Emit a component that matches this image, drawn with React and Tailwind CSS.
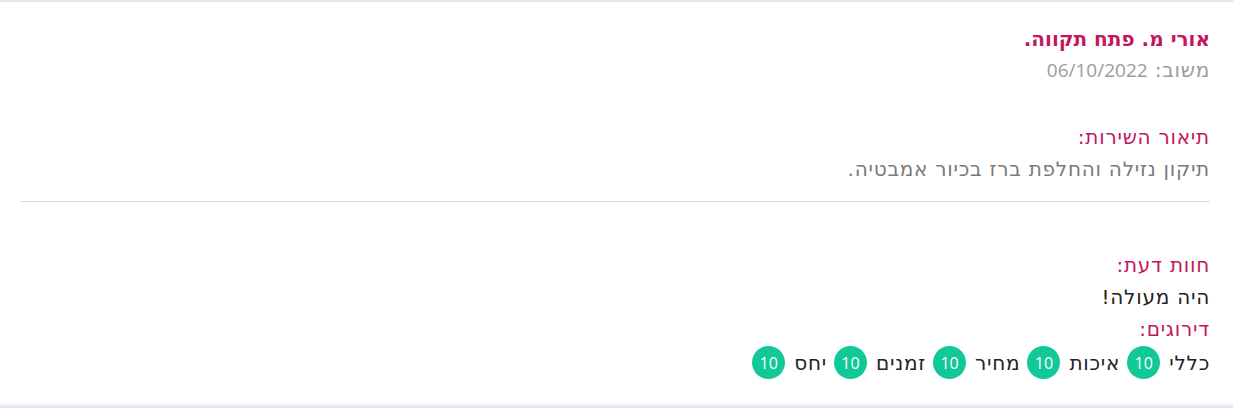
import React from "react";

const ratings = [
  { label: "כללי", score: 10 },
  { label: "איכות", score: 10 },
  { label: "מחיר", score: 10 },
  { label: "זמנים", score: 10 },
  { label: "יחס", score: 10 },
];

const ReviewCard = () => {
  return (
    <div
      dir="rtl"
      className="w-full h-[408px] bg-white border-t-2 border-[#e6e6e6] font-['DejaVu_Sans',sans-serif] tracking-[0.75px] relative overflow-hidden"
    >
      <div className="pr-[23px] pl-[20px] pt-[22px]">
        {/* Heading */}
        <h2 className="text-[20px] leading-[30px] font-bold tracking-normal text-[#c4165c]">
          אורי מ. פתח תקווה.
        </h2>
        <div className="text-[20px] leading-[32px] text-[#9b9b9b]">
          משוב:{" "}
          <span className="font-['Open_Sans',sans-serif] text-[19px] tracking-normal">
            06/10/2022
          </span>
        </div>

        <div className="mt-[35px] text-[20px] leading-[32px] text-[#c4165c]">
          תיאור השירות:
        </div>
        <div className="text-[20px] leading-[32px] text-[#7a7a7a]">
          תיקון נזילה והחלפת ברז בכיור אמבטיה.
        </div>

        <hr className="mt-[16px] border-t border-[#dddddd]" />

        <div className="mt-[47px] text-[20px] leading-[32px] text-[#c4165c]">
          חוות דעת:
        </div>
        <div className="text-[20px] leading-[32px] text-[#222222]">
          היה מעולה!
        </div>
        <div className="text-[20px] leading-[32px] text-[#c4165c]">
          דירוגים:
        </div>

        {/* Ratings */}
        <div className="mt-[1px] flex items-center gap-[7px] text-[20px] leading-[32px] text-[#222222]">
          {ratings.map((r) => (
            <div key={r.label} className="flex items-center gap-[9px]">
              <span>{r.label}</span>
              <span className="w-[33px] h-[33px] rounded-full bg-[#10c898] text-white text-[16px] tracking-normal font-['Open_Sans',sans-serif] flex items-center justify-center">
                {r.score}
              </span>
            </div>
          ))}
        </div>
      </div>

      {/* bottom fade */}
      <div className="absolute bottom-0 left-0 right-0 h-[6px] bg-gradient-to-b from-white to-[#dce3f0]" />
    </div>
  );
};

export default function App() {
  return <ReviewCard />;
}
